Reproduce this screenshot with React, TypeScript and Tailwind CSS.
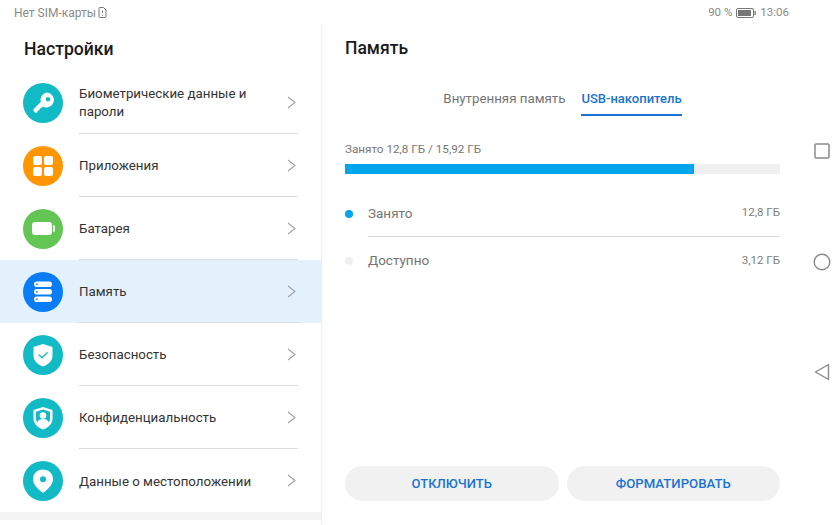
import React from 'react';

const KeyIcon = () => (
  <svg viewBox="0 0 40 40" className="w-10 h-10">
    <circle cx="20" cy="20" r="20" fill="#12bac6" />
    <path fillRule="evenodd" fill="#fff" d="M23.5 9.5a7.5 7.5 0 1 1-3.6 14.1l-1.6 1.6-1.6.1-.1 2-2 .2-.2 1.9-2.2.3-1.6-1.6-.1-1.9 7.3-7.3a7.5 7.5 0 0 1 5.7-9.4zM25 14a2.2 2.2 0 1 0 0 4.4 2.2 2.2 0 0 0 0-4.4z" />
  </svg>
);

const AppsIcon = () => (
  <svg viewBox="0 0 40 40" className="w-10 h-10">
    <circle cx="20" cy="20" r="20" fill="#ff9500" />
    <rect x="10" y="10" width="9" height="9" rx="2" fill="#fff" />
    <rect x="21" y="10" width="9" height="9" rx="2" fill="#fff" />
    <rect x="10" y="21" width="9" height="9" rx="2" fill="#fff" />
    <rect x="21" y="21" width="9" height="9" rx="2" fill="#fff" />
  </svg>
);

const BatteryIcon = () => (
  <svg viewBox="0 0 40 40" className="w-10 h-10">
    <circle cx="20" cy="20" r="20" fill="#62c554" />
    <rect x="9" y="13" width="20" height="13" rx="3" fill="#fff" />
    <rect x="30" y="16" width="1.8" height="7" rx="0.9" fill="#fff" />
  </svg>
);

const StorageIcon = () => (
  <svg viewBox="0 0 40 40" className="w-10 h-10">
    <circle cx="20" cy="20" r="20" fill="#0a7cf7" />
    <rect x="11" y="9.5" width="18" height="5.6" rx="2.8" fill="#fff" />
    <rect x="11" y="17" width="18" height="5.6" rx="2.8" fill="#fff" />
    <rect x="11" y="24.5" width="18" height="5.6" rx="2.8" fill="#fff" />
    <circle cx="14" cy="12.3" r="0.9" fill="#0a7cf7" />
    <circle cx="14" cy="19.8" r="0.9" fill="#0a7cf7" />
    <circle cx="14" cy="27.3" r="0.9" fill="#0a7cf7" />
  </svg>
);

const ShieldIcon = () => (
  <svg viewBox="0 0 40 40" className="w-10 h-10">
    <circle cx="20" cy="20" r="20" fill="#12bac6" />
    <path fill="#fff" d="M20 9l9.5 3v8.5c0 5.5-4 9-9.5 11-5.500-2-9.500-5.500-9.500-11V12z" />
    <path fill="none" stroke="#12bac6" strokeWidth="1.3" strokeLinecap="round" strokeLinejoin="round" d="M16 20l3 2.800 5.200-5" />
  </svg>
);

const PrivacyIcon = () => (
  <svg viewBox="0 0 40 40" className="w-10 h-10">
    <circle cx="20" cy="20" r="20" fill="#12bac6" />
    <path fill="#fff" d="M20 9l9.500 3v8.500c0 5.500-4 9-9.500 11-5.500-2-9.500-5.500-9.500-11V12z" />
    <path fill="#12bac6" d="M20 11.500l7 2.200v6.800c0 1.500-.4 2.800-1.100 3.900-1-2.100-3.200-3.300-5.900-3.300s-4.900 1.200-5.900 3.300c-.7-1.100-1.100-2.400-1.100-3.900v-6.800z" />
    <circle cx="20" cy="17.500" r="3.300" fill="#fff" />
  </svg>
);

const LocationIcon = () => (
  <svg viewBox="0 0 40 40" className="w-10 h-10">
    <circle cx="20" cy="20" r="20" fill="#12bac6" />
    <path fill="#fff" fillRule="evenodd" d="M20 8.500c5.800 0 10 4.200 10 9.700 0 4.800-4.500 9.500-8.700 12.800a2 2 0 0 1-2.600 0C14.500 27.700 10 23 10 18.200c0-5.500 4.200-9.700 10-9.700zm0 6.800a3 3 0 1 0 0 6 3 3 0 0 0 0-6z" />
  </svg>
);

const Chevron = () => (
  <svg viewBox="0 0 9 13" className="w-[9px] h-[13px] shrink-0" fill="none" stroke="#a0a0a0" strokeWidth="1.100">
    <path d="M1 1l7 5.500L1 12" />
  </svg>
);

const menu = [
  { title: 'Биометрические данные и пароли', icon: <KeyIcon /> },
  { title: 'Приложения', icon: <AppsIcon /> },
  { title: 'Батарея', icon: <BatteryIcon /> },
  { title: 'Память', icon: <StorageIcon />, active: true },
  { title: 'Безопасность', icon: <ShieldIcon /> },
  { title: 'Конфиденциальность', icon: <PrivacyIcon /> },
  { title: 'Данные о местоположении', icon: <LocationIcon /> },
];

const App: React.FC = () => {
  return (
    <div className="w-[840px] h-[525px] bg-white flex flex-col overflow-hidden font-['Roboto',sans-serif]">
      <div className="h-[25px] shrink-0 flex items-center justify-between pl-[14px] pr-[51px] text-[#8a8a8a]">
        <div className="flex items-center gap-[2px] text-[12px]">
          <span>Нет SIM-карты</span>
          <svg viewBox="0 0 9 11" className="w-[9px] h-[11px]" fill="none" stroke="#777" strokeWidth="1">
            <path d="M1 1.500a1 1 0 0 1 1-1h3.500L8 3v6.500a1 1 0 0 1-1 1H2a1 1 0 0 1-1-1z" />
            <path d="M4.500 3.500v2.500M4.500 7.500v1" />
          </svg>
        </div>
        <div className="flex items-center gap-[4px] text-[11.500px]">
          <span>90 %</span>
          <svg viewBox="0 0 20 10" className="w-5 h-[10px]">
            <rect x="0.500" y="0.500" width="17" height="9" rx="1.500" fill="none" stroke="#777" />
            <rect x="2" y="2" width="13" height="6" fill="#777" />
            <rect x="18.500" y="3" width="1.300" height="4" fill="#777" />
          </svg>
          <span>13:06</span>
        </div>
      </div>

      <div className="flex-1 flex min-h-0">
        <aside className="w-[322px] shrink-0 border-r border-[#efefef] flex flex-col">
          <h1 className="h-[46px] pl-[24px] pt-[13px] text-[17.600px] leading-[22px] font-medium text-[#1a1a1a]">Настройки</h1>
          {menu.map((item, i) => (
            <div key={item.title} className={`h-[63px] shrink-0 flex items-center pl-[23px] ${item.active ? 'bg-[#e3f1fd]' : ''}`}>
              <div className="w-10 h-10 shrink-0">{item.icon}</div>
              <div className={`ml-[16px] w-[219px] h-full flex items-center pr-[2px] ${i < menu.length - 1 ? 'border-b border-[#dcdcdc]' : ''}`}>
                <div className="flex-1 pr-6 pt-[2px] text-[13.300px] leading-[18px] text-[#333]">{item.title}</div>
                <Chevron />
              </div>
            </div>
          ))}
          <div className="h-2 shrink-0 bg-[#f3f3f3]" />
        </aside>

        <main className="flex-1 pl-[23px] flex flex-col pb-[24px]">
          <h2 className="pt-[12px] text-[17.500px] leading-[22px] font-medium text-[#1a1a1a]">Память</h2>
          <div className="mt-[30px] flex justify-center gap-[16px] leading-[18px]">
            <div className="text-[13.300px] text-[#757575] pt-[1px]">Внутренняя память</div>
            <div className="text-[13px] text-[#1a73d2] font-medium pt-[1px] pb-[6px] border-b-2 border-[#1a73d2]">USB-накопитель</div>
          </div>
          <div className="mt-[25px] text-[11.700px] leading-[16px] text-[#777]">Занято 12,8 ГБ / 15,92 ГБ</div>
          <div className="mt-[7px] h-[10px] bg-[#f0f0f0]">
            <div className="h-full w-[349px] bg-[#00a5ec]" />
          </div>
          <div className="mt-[16px] flex flex-col">
            <div className="h-[47px] flex items-center">
              <div className="w-2 h-2 rounded-full bg-[#00a5ec]" />
              <div className="ml-[15px] flex-1 h-full flex items-center justify-between border-b border-[#dcdcdc]">
                <span className="text-[13.500px] text-[#757575]">Занято</span>
                <span className="text-[11.500px] text-[#808080]">12,8 ГБ</span>
              </div>
            </div>
            <div className="h-[47px] flex items-center">
              <div className="w-2 h-2 rounded-full bg-[#f0f0f0]" />
              <div className="ml-[15px] flex-1 h-full flex items-center justify-between">
                <span className="text-[13.500px] text-[#757575]">Доступно</span>
                <span className="text-[11.500px] text-[#808080]">3,12 ГБ</span>
              </div>
            </div>
          </div>
          <div className="mt-auto flex gap-2">
            <button className="flex-1 h-[35px] rounded-full bg-[#f1f1f1] text-[13px] font-medium text-[#1a73d2]">ОТКЛЮЧИТЬ</button>
            <button className="flex-1 h-[35px] rounded-full bg-[#f1f1f1] text-[13.200px] font-medium text-[#1a73d2]">ФОРМАТИРОВАТЬ</button>
          </div>
        </main>

        <nav className="w-[60px] shrink-0 flex flex-col items-center pl-[24px] pt-[118px]">
          <svg viewBox="0 0 16 16" className="w-4 h-4" fill="none" stroke="#8a8a8a" strokeWidth="1.500">
            <rect x="1" y="1" width="14" height="14" rx="1" />
          </svg>
          <svg viewBox="0 0 18 18" className="mt-[94px] w-[18px] h-[18px]" fill="none" stroke="#8a8a8a" strokeWidth="1.400">
            <circle cx="9" cy="9" r="7.800" />
          </svg>
          <svg viewBox="0 0 16 18" className="mt-[92px] w-4 h-[18px]" fill="none" stroke="#8a8a8a" strokeWidth="1.400" strokeLinejoin="round">
            <path d="M14.500 1.500v15L1.500 9z" />
          </svg>
        </nav>
      </div>
    </div>
  );
};

export default App;
